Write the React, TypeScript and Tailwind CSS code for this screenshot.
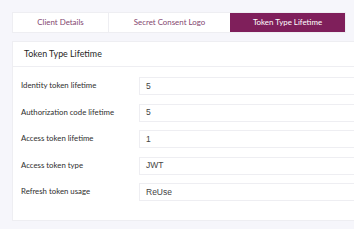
import React from "react";

const rows = [
  ["Identity token lifetime", "5"],
  ["Authorization code lifetime", "5"],
  ["Access token lifetime", "1"],
  ["Access token type", "JWT"],
  ["Refresh token usage", "ReUse"],
];

export default function App() {
  return (
    <div className="w-[354px] h-[229px] overflow-hidden bg-[#f6f6fb] pl-[12px] pt-[12px]" style={{ fontFamily: "Lato, 'Noto Sans', sans-serif" }}>
      <div className="flex w-[334px] h-[21px] bg-white border border-[#eeeef2] text-[7.9px]">
        <div className="w-[96px] flex items-center justify-center text-[#84466f] border-r border-[#eeeef2]">Client Details</div>
        <div className="w-[121px] flex items-center justify-center text-[#84466f]">Secret Consent Logo</div>
        <div className="flex-1 flex items-center justify-center bg-[#7f1f5b] text-white">Token Type Lifetime</div>
      </div>
      <div className="mt-[8px] w-[360px] h-[180px] bg-white border border-[#eeeef2]">
        <div className="h-[25px] flex items-center pl-[11px] text-[8.9px] text-[#1f1f1f] border-b border-[#eeeef2]">Token Type Lifetime</div>
        <div className="flex flex-col gap-[8.5px] pt-[10px] pl-[8px]">
          {rows.map(([l, v]) => (
            <div key={l} className="flex items-center h-[18px]">
              <div className="w-[118px] text-[7.8px] text-[#2e2e2e]">{l}</div>
              <div className="flex-1 h-full border border-[#eeeef2] flex items-center pl-[6px] text-[8.5px] text-[#444]" style={{ fontFamily: "'Liberation Sans', Arial, sans-serif" }}>{v}</div>
            </div>
          ))}
        </div>
      </div>
    </div>
  );
}
